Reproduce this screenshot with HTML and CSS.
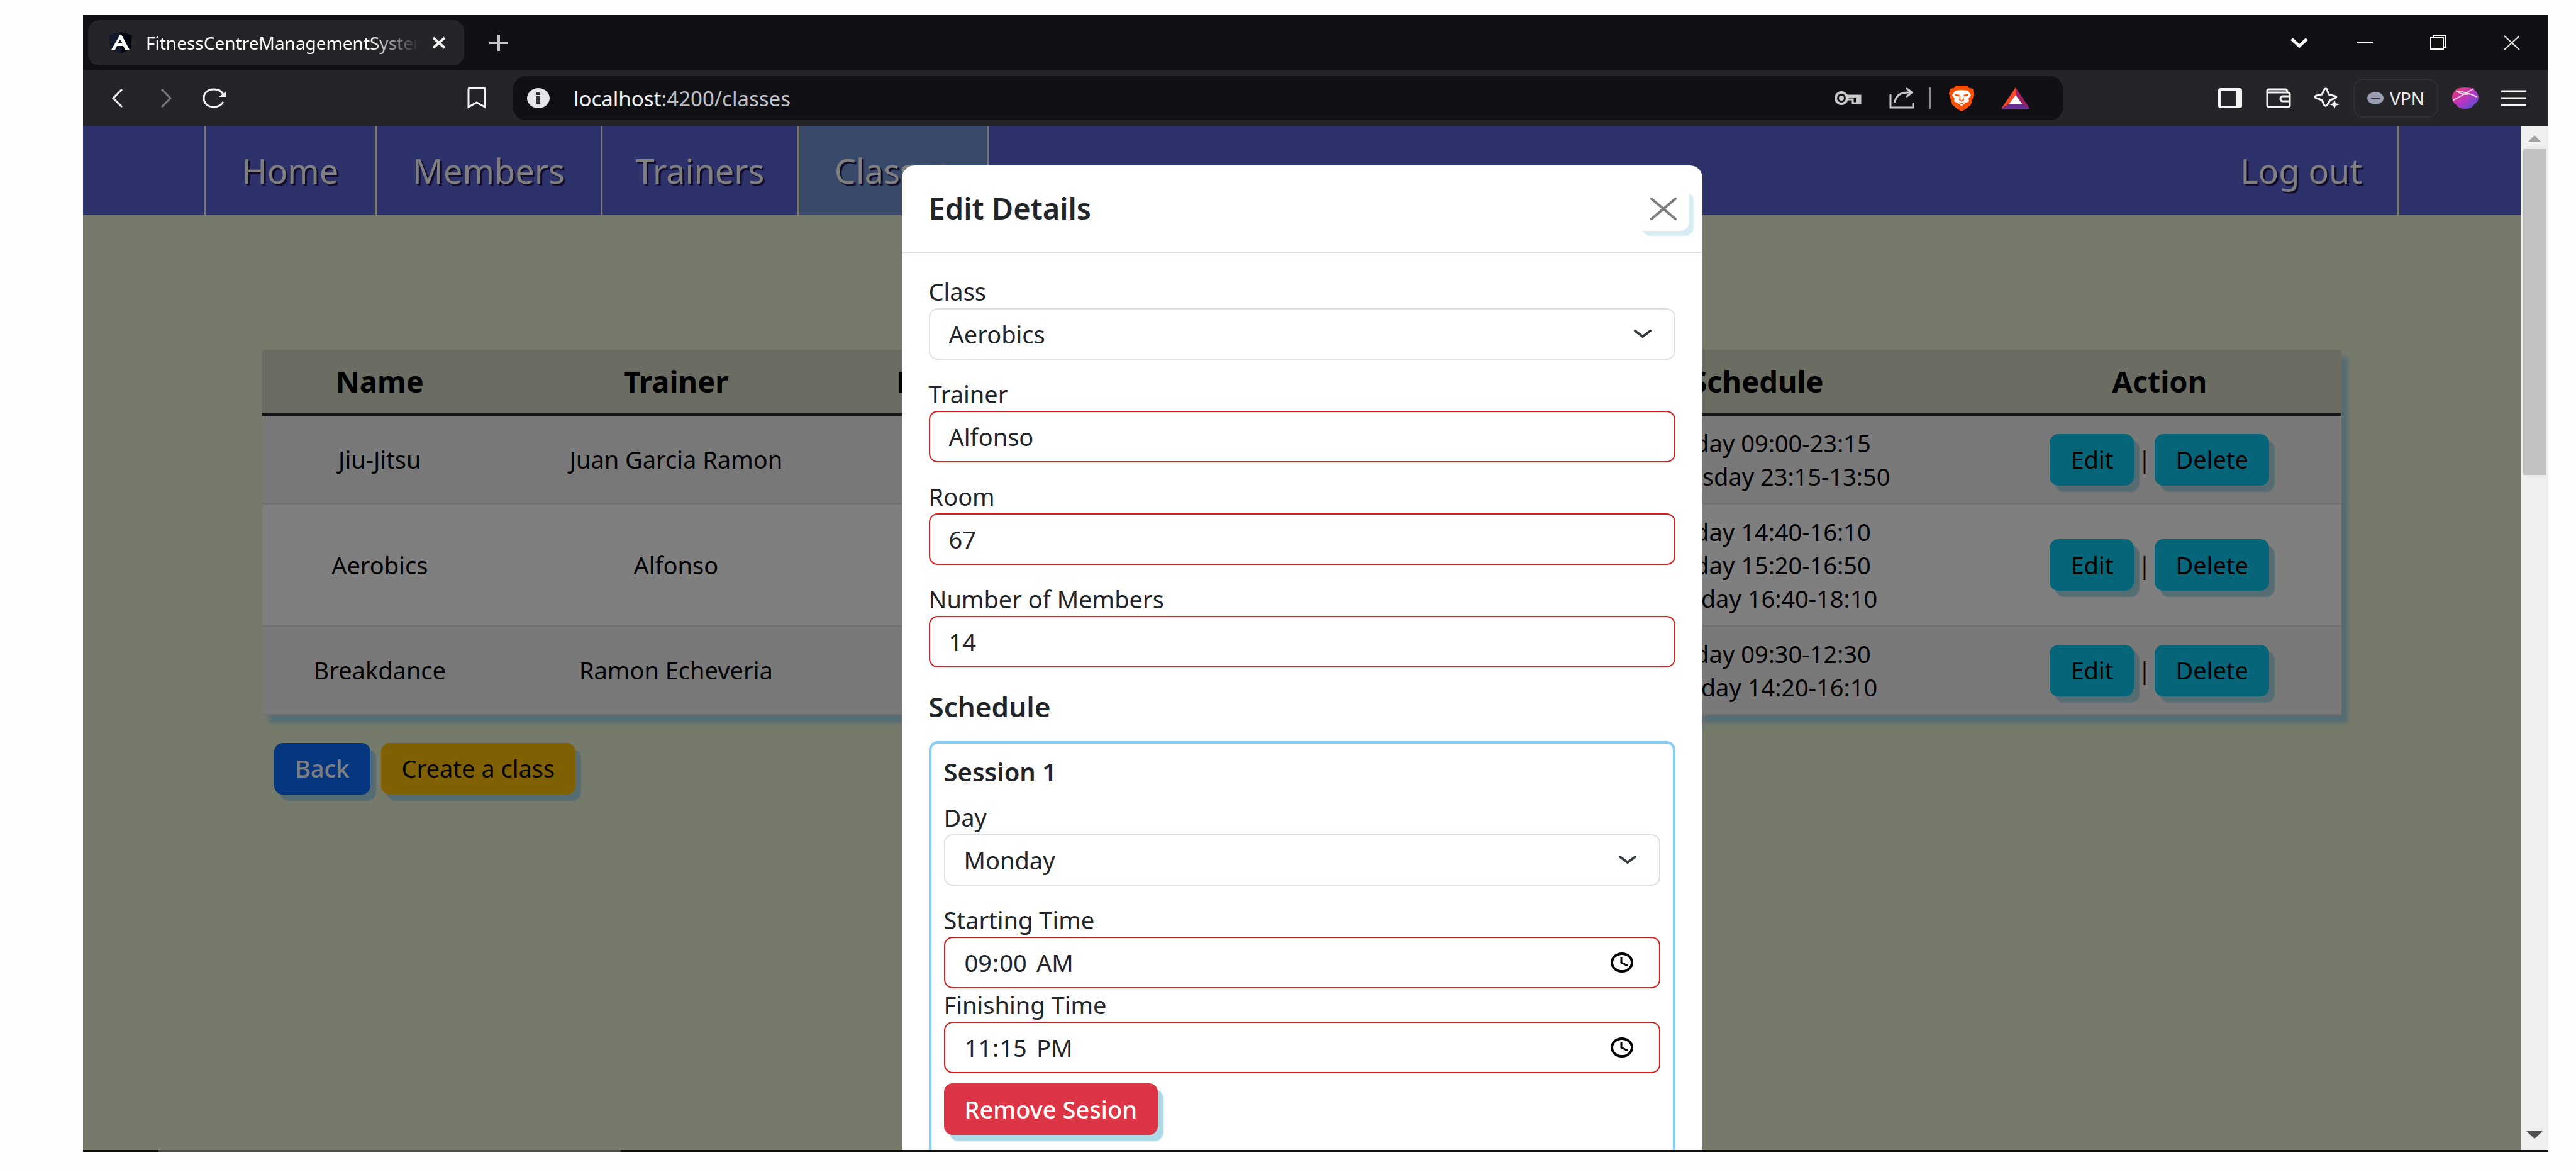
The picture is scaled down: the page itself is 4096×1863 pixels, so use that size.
FILE: index.html
```html
<!DOCTYPE html>
<html lang="en">
<head>
<meta charset="utf-8">
<meta name="viewport" content="width=device-width, initial-scale=1">
<title>FitnessCentreManagementSystem</title>
<link rel="stylesheet" href="styles.css">
</head>
<body>
<div class="window">
  <header class="titlebar">
    <div class="tab">
      <svg class="tab-icon" width="40" height="34" viewBox="0 0 40 34"><path d="M20 0 38 5 36 27 20 34 4 27 2 5z" fill="#02040f"/><path d="M20 0 2 5 4 27 20 34z" fill="#141a2c"/><path d="M19 4 5 28h6l3-6h10l3 6h7L21 4zm0 8 4 6h-8z" fill="#fff"/></svg>
      <span class="tab-title">FitnessCentreManagementSystem</span>
      <button class="tab-close" aria-label="Close tab"><svg width="24" height="20" viewBox="0 0 24 20"><path d="M3 2 21 18M21 2 3 18" stroke="#f0f0f2" stroke-width="4" fill="none"/></svg></button>
    </div>
    <button class="tool tab-new" aria-label="New tab"><svg width="30" height="26" viewBox="0 0 30 26"><path d="M15 0v26M0 13h30" stroke="#c8c8ca" stroke-width="4" fill="none"/></svg></button>
    <div class="controls">
      <button class="control control-small" aria-label="Search tabs"><svg width="30" height="18" viewBox="0 0 30 18"><path d="M3 3 15 14 27 3" stroke="#fff" stroke-width="5" fill="none"/></svg></button>
      <button class="control" aria-label="Minimise"><svg width="26" height="24" viewBox="0 0 26 24"><path d="M0 12h26" stroke="#fff" stroke-width="2"/></svg></button>
      <button class="control" aria-label="Restore"><svg width="26" height="24" viewBox="0 0 26 24"><path d="M1 4h20v18H1zM5 4V1h20v18h-4" stroke="#fff" stroke-width="2" fill="none"/></svg></button>
      <button class="control" aria-label="Close"><svg width="26" height="24" viewBox="0 0 26 24"><path d="M1 1 25 23M25 1 1 23" stroke="#e6e6e6" stroke-width="2" fill="none"/></svg></button>
    </div>
  </header>
  <div class="toolbar">
    <div class="toolbar-left">
      <div class="tools">
        <button class="tool" aria-label="Back"><svg width="20" height="32" viewBox="0 0 20 32"><path d="M17 2 3 16 17 30" stroke="#f4f4f6" stroke-width="3" fill="none"/></svg></button>
        <button class="tool" aria-label="Forward"><svg width="20" height="32" viewBox="0 0 20 32"><path d="M3 2 17 16 3 30" stroke="#77777c" stroke-width="3" fill="none"/></svg></button>
        <button class="tool" aria-label="Reload"><svg width="40" height="32" viewBox="0 0 40 32"><path d="M35 13C33 6 27 2 19 2 9 2 3 8 3 16s6 14 16 14c7 0 12-3 15-8" stroke="#f4f4f6" stroke-width="3" fill="none"/><path d="M27 14h12V5z" fill="#f4f4f6"/></svg></button>
      </div>
      <button class="tool" aria-label="Bookmark this page"><svg width="30" height="34" viewBox="0 0 30 34"><path d="M2 31V3q0-2 2-2h22q2 0 2 2v28L15 24z" stroke="#f4f4f6" stroke-width="3" fill="none"/></svg></button>
    </div>
    <div class="address">
      <svg width="36" height="32" viewBox="0 0 36 32"><ellipse cx="18" cy="16" rx="18" ry="16" fill="#e6e6ea"/><path d="M15 7h6v4h-6zM14 13h7v12h-6v-9h-1z" fill="#333338"/></svg>
      <span class="url">localhost<span class="url-path">:4200/classes</span></span>
      <div class="address-tools">
        <button class="tool tool-wide" aria-label="Saved passwords"><svg width="44" height="22" viewBox="0 0 44 22"><circle cx="12" cy="11" r="9" stroke="#c9c9cc" stroke-width="4" fill="none"/><circle cx="12" cy="11" r="4" fill="#c9c9cc"/><path d="M20 7h22v12H30v-6h-9" stroke="#c9c9cc" stroke-width="3" fill="none"/><path d="M22 6h20v5H22zM35 11h6v8h-6z" fill="#c9c9cc"/></svg></button>
        <button class="tool tool-wide" aria-label="Share"><svg width="40" height="34" viewBox="0 0 40 34"><path d="M2 10v22h36v-8" stroke="#c9c9cc" stroke-width="3" fill="none"/><path d="M9 24C10 13 18 7 34 8M27 1l9 7-9 7" stroke="#c9c9cc" stroke-width="3" fill="none"/></svg></button>
        <span class="separator"></span>
        <button class="tool tool-wide" aria-label="Shields"><svg width="42" height="42" viewBox="0 0 42 42"><path d="M12 1h18l3 4 6 1 2 8-5 17-8 7-7 4-7-4-8-7L1 14l2-8 6-1z" fill="#ff5000"/><path d="M21 8 11 9l-5 7 4 6-1 4 8 4 4 4 4-4 8-4-1-4 4-6-5-7z" fill="#fff"/><path d="m10 14 8 2-1 2-6-1zM32 14l-8 2 1 2 6-1zM18 17h1v6l2 2 2-2v-6h1l1 7-4 3-4-3zM15 27l6 2 6-2-6 4z" fill="#ff5000"/></svg></button>
        <button class="tool tool-wide" aria-label="Rewards"><svg width="46" height="34" viewBox="0 0 46 34"><path d="M23 0 0 34l13-8 10-14z" fill="#ff4724"/><path d="M23 0v12l10 14 13 8z" fill="#9e1f63"/><path d="M0 34h46l-13-8H13z" fill="#662d91"/><path d="M23 12 12 27h22z" fill="#fff"/></svg></button>
      </div>
    </div>
    <div class="toolbar-right">
      <button class="tool" aria-label="Sidebar"><svg width="38" height="32" viewBox="0 0 38 32"><rect x="2" y="2" width="34" height="28" rx="2" stroke="#f4f4f6" stroke-width="4" fill="none"/><path d="M28 2h8v28h-8z" fill="#f4f4f6"/></svg></button>
      <button class="tool" aria-label="Wallet"><svg width="40" height="32" viewBox="0 0 40 32"><path d="M2 4q0-2 3-2h26q3 0 3 5 4 0 4 3v17q0 3-4 3H5q-3 0-3-3zM2 7h32M38 13H27q-4 0-4 4t4 4h11" stroke="#f4f4f6" stroke-width="3" fill="none"/></svg></button>
      <button class="tool" aria-label="Leo"><svg width="40" height="34" viewBox="0 0 40 34"><path d="M18 2q2 0 3 4l2 5 10 3q4 1 0 3l-8 3-4 7q-3 5-6 0l-3-7-9-3q-4-2 0-4l9-2 3-6q1-3 3-3z" stroke="#f4f4f6" stroke-width="3" fill="none"/><path d="m32 20 2 5 6 2-6 2-2 5-2-5-6-2 6-2z" fill="#f4f4f6"/></svg></button>
      <button class="vpn"><svg width="26" height="20" viewBox="0 0 26 20"><ellipse cx="13" cy="10" rx="13" ry="10" fill="#9a9cb2"/><path d="M6 10h14" stroke="#33343c" stroke-width="2"/></svg>VPN</button>
      <button class="tool" aria-label="Profile"><svg width="42" height="34" viewBox="0 0 42 34"><defs><linearGradient id="ball" x1="0" y1="0" x2="1" y2="1"><stop offset="0" stop-color="#f0366a"/><stop offset=".5" stop-color="#bb35bd"/><stop offset="1" stop-color="#4356df"/></linearGradient></defs><path d="M8 2q13-4 26 0 8 7 8 14t-7 11q-3 7-14 7t-14-6Q0 24 0 17 0 8 8 2z" fill="url(#ball)"/><path d="M2 20Q14 14 34 2M6 6q14 0 34 9M6 5q10 8 22 5" stroke="#fbd5ee" stroke-width="2" fill="none"/></svg></button>
      <button class="tool" aria-label="Menu"><svg width="40" height="26" viewBox="0 0 40 26"><path d="M0 2h40M0 13h40M0 24h40" stroke="#f4f4f6" stroke-width="3"/></svg></button>
    </div>
  </div>

  <div class="viewport">
    <div class="page">
      <nav class="navbar">
        <a class="nav-link nav-first" href="#home">Home</a>
        <a class="nav-link" href="#members">Members</a>
        <a class="nav-link" href="#trainers">Trainers</a>
        <a class="nav-link nav-active" href="#classes">Classes</a>
        <a class="nav-link nav-end" href="#logout">Log out</a>
      </nav>
      <main class="content">
        <table class="classes">
          <colgroup><col class="col-name"><col class="col-trainer"><col class="col-room"><col class="col-members"><col class="col-schedule"><col class="col-action"></colgroup>
          <thead>
            <tr><th>Name</th><th>Trainer</th><th>Room</th><th>Number of Members</th><th>Schedule</th><th>Action</th></tr>
          </thead>
          <tbody>
            <tr><td>Jiu-Jitsu</td><td>Juan Garcia Ramon</td><td>12</td><td>20</td><td>Monday 09:00-23:15<br>Wednesday 23:15-13:50</td><td><div class="actions"><button class="btn btn-info">Edit</button>|<button class="btn btn-info">Delete</button></div></td></tr>
            <tr><td>Aerobics</td><td>Alfonso</td><td>67</td><td>14</td><td>Monday 14:40-16:10<br>Monday 15:20-16:50<br>Thursday 16:40-18:10</td><td><div class="actions"><button class="btn btn-info">Edit</button>|<button class="btn btn-info">Delete</button></div></td></tr>
            <tr><td>Breakdance</td><td>Ramon Echeveria</td><td>31</td><td>18</td><td>Monday 09:30-12:30<br>Thursday 14:20-16:10</td><td><div class="actions"><button class="btn btn-info">Edit</button>|<button class="btn btn-info">Delete</button></div></td></tr>
          </tbody>
        </table>
        <div class="page-actions">
          <button class="btn btn-primary">Back</button>
          <button class="btn btn-warning">Create a class</button>
        </div>
      </main>

      <div class="backdrop">
        <section class="modal" role="dialog" aria-labelledby="modal-title">
          <div class="modal-header">
            <h1 class="modal-title" id="modal-title">Edit Details</h1>
            <button class="modal-close" aria-label="Close"><svg width="42" height="36" viewBox="0 0 42 36"><path d="M2 2 40 34M40 2 2 34" stroke="#7c7c7c" stroke-width="4" stroke-linecap="round" fill="none"/></svg></button>
          </div>
          <form class="modal-body">
            <div class="field">
              <label for="class">Class</label>
              <select class="input select" id="class"><option>Aerobics</option></select>
            </div>
            <div class="field">
              <label for="trainer">Trainer</label>
              <input class="input invalid" id="trainer" type="text" value="Alfonso">
            </div>
            <div class="field">
              <label for="room">Room</label>
              <input class="input invalid" id="room" type="text" value="67">
            </div>
            <div class="field">
              <label for="members">Number of Members</label>
              <input class="input invalid" id="members" type="text" value="14">
            </div>
            <h2 class="schedule-title">Schedule</h2>
            <fieldset class="session">
              <h3 class="session-title">Session 1</h3>
              <div class="field">
                <label for="day">Day</label>
                <select class="input select" id="day"><option>Monday</option></select>
              </div>
              <label for="start">Starting Time</label>
              <input class="input invalid" id="start" type="time" value="09:00">
              <label for="finish">Finishing Time</label>
              <input class="input invalid" id="finish" type="time" value="23:15">
              <button class="btn btn-danger" type="button">Remove Sesion</button>
            </fieldset>
          </form>
        </section>
      </div>
    </div>
    <div class="scrollbar">
      <svg width="20" height="10" viewBox="0 0 20 10"><path d="M10 0 20 10H0z" fill="#a3a3a3"/></svg>
      <div class="scroll-thumb"></div>
      <svg width="26" height="12" viewBox="0 0 26 12"><path d="M0 0h26L13 12z" fill="#505050"/></svg>
    </div>
  </div>
  <div class="taskbar"><span class="task"></span></div>
</div>
</body>
</html>
```
FILE: styles.css
```css
* { box-sizing: border-box; }

body {
  margin: 0;
  background: #fefefe;
  color: #212529;
  font: 38px/53px "Noto Sans", "Open Sans", sans-serif;
}

button, input, select { font: inherit; color: inherit; }
button { margin: 0; padding: 0; border: 0; background: none; white-space: nowrap; }
svg { display: block; flex: none; }

.window {
  display: flex;
  flex-direction: column;
  height: 100vh;
  padding: 24px 44px 32px 132px;
}

/* Browser chrome */
.titlebar {
  display: flex;
  align-items: center;
  flex: none;
  height: 88px;
  padding-left: 8px;
  background: #111015;
}
.tab {
  display: flex;
  align-items: center;
  width: 598px;
  height: 72px;
  padding: 0 28px 0 32px;
  border-radius: 18px;
  background: #252429;
}
.tab-title {
  flex: 1;
  min-width: 0;
  margin: 0 20px;
  overflow: hidden;
  white-space: nowrap;
  color: #fff;
  font-size: 28px;
  -webkit-mask-image: linear-gradient(to right, #000 82%, transparent);
  mask-image: linear-gradient(to right, #000 82%, transparent);
}
.tool {
  display: flex;
  align-items: center;
  justify-content: center;
  flex: none;
  width: 77px;
  height: 72px;
}
.tool-wide { width: 86px; }
.tab-new { margin-left: 16px; }
.controls { display: flex; margin-left: auto; }
.control {
  display: flex;
  align-items: center;
  justify-content: center;
  width: 117px;
  height: 88px;
}
.control-small { width: 90px; }

.toolbar {
  display: flex;
  align-items: center;
  flex: none;
  height: 88px;
  background: #252429;
}
.toolbar-left {
  display: flex;
  justify-content: space-between;
  width: 684px;
  padding: 0 20px 0 16px;
}
.tools { display: flex; }
.address {
  display: flex;
  align-items: center;
  flex: 1;
  height: 70px;
  padding: 0 32px 0 22px;
  border-radius: 20px;
  background: #111015;
}
.url { margin-left: 38px; color: #f2f2f4; font-size: 33px; }
.url-path { color: #c0c0c4; }
.address-tools { display: flex; align-items: center; margin-left: auto; }
.separator { width: 3px; height: 34px; margin-right: 6px; background: #8a8a8e; }
.toolbar-right {
  display: flex;
  align-items: center;
  justify-content: flex-end;
  width: 772px;
  padding-right: 17px;
}
.vpn {
  display: flex;
  align-items: center;
  justify-content: center;
  gap: 10px;
  width: 135px;
  height: 62px;
  margin: 0 4px;
  border: 2px solid #302f35;
  border-radius: 16px;
  color: #ececf0;
  font-size: 28px;
}

/* Page area */
.viewport { display: flex; flex: 1; min-height: 0; }
.page {
  position: relative;
  flex: 1;
  overflow: hidden;
  background: #ecf4d6;
}
.navbar {
  display: grid;
  grid-template-columns: 274px 359px 313px 301px 1fr;
  height: 142px;
  padding: 0 193px;
  background: #5a64d6;
}
.nav-link {
  border-right: 3px solid #f0f0dc;
  color: #fff;
  font-size: 54px;
  line-height: 142px;
  text-align: center;
  text-decoration: none;
  text-shadow: 3px 3px 1px #241650;
}
.nav-first { border-left: 2px solid #f0f0dc; }
.nav-active { background: #7292d4; }
.nav-end { justify-self: end; padding: 0 56px; }

.content { padding: 214px 285px 0; }
.classes {
  width: 100%;
  table-layout: fixed;
  border-collapse: collapse;
  background: #fff;
  color: #000;
  text-align: center;
  box-shadow: 10px 12px 6px #add8e6;
}
.col-name { width: 11.3%; }
.col-trainer { width: 17.2%; }
.col-room { width: 8.1%; }
.col-members { width: 24.7%; }
.col-schedule { width: 21.2%; }
.col-action { width: 17.5%; }
.classes th {
  height: 102px;
  padding: 2px 0 0;
  border-bottom: 5px solid #24282c;
  background: #d8dac4;
  font-size: 47px;
  font-weight: 700;
}
.classes td { padding: 17px 0 16px; border-bottom: 2px solid #dee2e6; }
.classes tbody tr:nth-child(odd) { background: #f2f2f2; }
.actions { display: flex; align-items: center; justify-content: center; gap: 6px; }

.btn {
  height: 82px;
  padding: 0 33px;
  border-radius: 14px;
  box-shadow: 9px 10px 2px #add8e6;
}
.btn-info { background: #0dcaf0; color: #000; }
.btn-primary { background: #0d6efd; color: #fff; font-weight: 500; }
.btn-warning { background: #ffc107; color: #000; }
.btn-danger { margin-top: 16px; background: #dc3545; color: #fff; font-weight: 500; }
.page-actions { display: flex; gap: 17px; padding: 44px 19px; }

/* Dialog */
.backdrop {
  position: absolute;
  inset: 0;
  display: flex;
  align-items: flex-start;
  justify-content: center;
  padding-top: 63px;
  background: rgba(0, 0, 0, 0.5);
}
.modal {
  width: 1273px;
  max-width: 100%;
  border-radius: 20px;
  background: #fff;
}
.modal-header {
  display: flex;
  align-items: center;
  justify-content: space-between;
  height: 139px;
  padding: 0 21px 0 43px;
  border-bottom: 2px solid #dee2e6;
}
.modal-title { margin: 0; font-size: 47px; font-weight: 600; }
.modal-close {
  display: flex;
  align-items: center;
  justify-content: center;
  width: 82px;
  height: 70px;
  border-radius: 14px;
  background: #fff;
  box-shadow: 7px 8px 2px #d6ebf2;
}
.modal-body { padding: 35px 43px; }
.modal-body label { display: block; }
.field { margin-bottom: 28px; }
.input {
  display: block;
  width: 100%;
  height: 82px;
  margin: 0;
  padding: 0 30px;
  border: 2px solid #dee2e6;
  border-radius: 14px;
  background: #fff;
  outline: 0;
}
.invalid { border-color: #d91c1c; }
.select {
  appearance: none;
  background: #fff url("data:image/svg+xml,%3Csvg xmlns='http://www.w3.org/2000/svg' width='28' height='14' viewBox='0 0 28 14'%3E%3Cpath d='M2 2 14 11 26 2' fill='none' stroke='%23343a40' stroke-width='4' stroke-linecap='round'/%3E%3C/svg%3E") no-repeat right 36px center;
}
.input::-webkit-datetime-edit-ampm-field { padding-left: 8px; }
.input::-webkit-calendar-picker-indicator {
  width: 38px;
  height: 32px;
  margin: 0 10px 0 0;
  padding: 0;
  background: url("data:image/svg+xml,%3Csvg xmlns='http://www.w3.org/2000/svg' width='38' height='32' viewBox='0 0 38 32'%3E%3Cellipse cx='19' cy='16' rx='16' ry='14' fill='none' stroke='%23000' stroke-width='4'/%3E%3Cpath d='M18 8v8l10 5' fill='none' stroke='%23000' stroke-width='3'/%3E%3C/svg%3E") no-repeat center;
}
.schedule-title { margin: 0 0 28px; padding-top: 8px; font-size: 44px; font-weight: 600; }
.session {
  margin: 0;
  padding: 18px 20px 40px;
  border: 4px solid #87cefa;
  border-radius: 14px;
}
.session-title { margin: 0 0 20px; font-size: 40px; font-weight: 600; }

/* Scrollbar and taskbar edge */
.scrollbar {
  display: flex;
  flex-direction: column;
  align-items: center;
  justify-content: space-between;
  width: 44px;
  padding: 15px 0 18px;
  background: #f0f0f0;
}
.scroll-thumb {
  width: 36px;
  height: 518px;
  margin: 12px 0 auto;
  background: #c1c1c1;
}
.taskbar { flex: none; height: 3px; background: #12100d; }
.task { display: block; width: 735px; height: 3px; margin-left: 120px; background: #4b4a49; }
```
